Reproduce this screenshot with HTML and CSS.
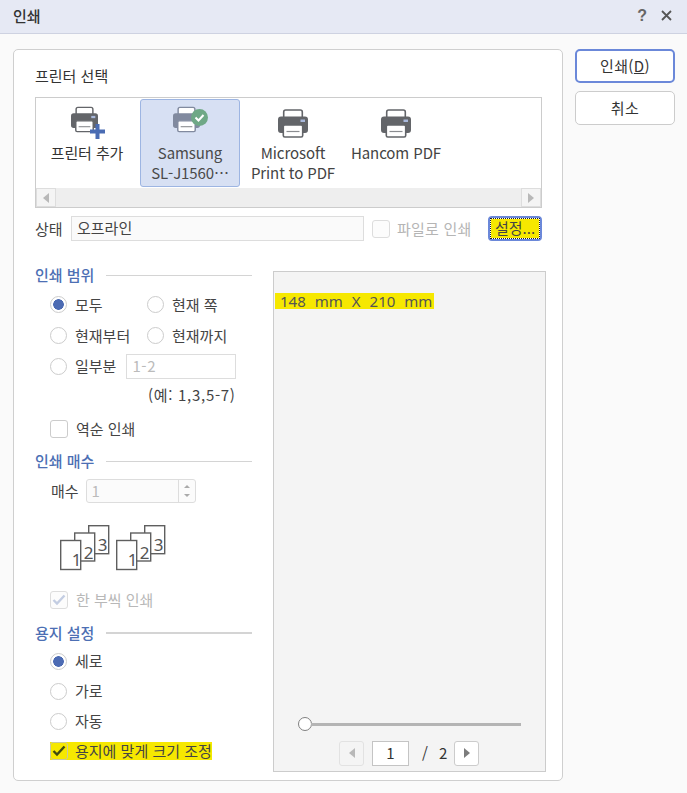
FILE: index.html
```html
<!DOCTYPE html>
<html lang="ko">
<head>
<meta charset="utf-8">
<title>인쇄</title>
<link rel="stylesheet" href="styles.css">
</head>
<body>
<svg class="defs" width="0" height="0">
  <symbol id="printer" viewBox="0 0 30 29">
    <rect x="5.7" y="1" width="18.6" height="12" rx="2" fill="#fff" stroke="currentColor" stroke-width="1.6"/>
    <path d="M3 7.5h24a3 3 0 0 1 3 3V21a3 3 0 0 1-3 3H3a3 3 0 0 1-3-3V10.500a3 3 0 0 1 3-3z" fill="currentColor"/>
    <rect x="22.500" y="10.500" width="4.500" height="2.500" fill="#a9b9dc"/>
    <rect x="5.300" y="16" width="19.400" height="12" rx="1.500" fill="#fff" stroke="currentColor" stroke-width="1.600"/>
    <path d="M8.500 22.500h13" stroke="#8a8c90" stroke-width="1.200"/>
  </symbol>
  <symbol id="pages" viewBox="0 0 50 46">
    <g fill="#fff" stroke="#5f5f5f" stroke-width="1.400">
      <rect x="28.700" y="0.700" width="20" height="28"/>
      <rect x="14.700" y="8" width="20" height="28"/>
      <rect x="0.700" y="15.500" width="20" height="29"/>
    </g>
  </symbol>
</svg>

<div class="titlebar">
  <span class="title">인쇄</span>
  <div class="title-tools">
    <span class="help">?</span>
    <svg class="close" width="11" height="11" viewBox="0 0 11 11"><path d="M1 1l9 9M10 1l-9 9" stroke="#555" stroke-width="1.800"/></svg>
  </div>
</div>

<div class="dialog">
  <main class="panel">
    <div class="top">
      <div class="heading">프린터 선택</div>
      <div class="printers">
        <div class="printer-row">
          <div class="printer printer-add">
            <span class="icon-wrap">
              <svg class="pr-icon" width="27" height="27"><use href="#printer"/></svg>
              <svg class="badge" width="17" height="17" viewBox="0 0 17 17"><path d="M8.500 1v15M1 8.500h15" stroke="#4a6cb3" stroke-width="4"/></svg>
            </span>
            <span class="pr-label">프린터 추가</span>
          </div>
          <div class="printer selected">
            <span class="icon-wrap">
              <svg class="pr-icon" width="27" height="27"><use href="#printer"/></svg>
              <svg class="badge badge-check" width="17" height="17" viewBox="0 0 17 17"><circle cx="8.500" cy="8.500" r="8.500" fill="#6fa886"/><path d="M4.500 8.500l3 3 5-5.500" fill="none" stroke="#fff" stroke-width="2"/></svg>
            </span>
            <span class="pr-label">Samsung<br>SL-J1560⋯</span>
          </div>
          <div class="printer">
            <span class="icon-wrap">
              <svg class="pr-icon" width="30" height="29"><use href="#printer"/></svg>
            </span>
            <span class="pr-label">Microsoft<br>Print to PDF</span>
          </div>
          <div class="printer">
            <span class="icon-wrap">
              <svg class="pr-icon" width="30" height="29"><use href="#printer"/></svg>
            </span>
            <span class="pr-label">Hancom PDF</span>
          </div>
        </div>
        <div class="hscroll">
          <span class="scroll-btn"><i class="tri tri-left"></i></span>
          <span class="scroll-btn"><i class="tri tri-right"></i></span>
        </div>
      </div>
      <div class="status-row">
        <span class="status-label">상태</span>
        <div class="status-field">오프라인</div>
        <span class="check disabled"></span>
        <span class="file-label">파일로 인쇄</span>
        <button class="setup"><span>설정...</span></button>
      </div>
    </div>

    <div class="lower">
      <div class="options">
        <div class="section first">인쇄 범위</div>
        <div class="grid-radios">
          <label class="row"><span class="radio on"></span>모두</label>
          <label class="row"><span class="radio"></span>현재 쪽</label>
          <label class="row"><span class="radio"></span>현재부터</label>
          <label class="row"><span class="radio"></span>현재까지</label>
        </div>
        <label class="row">
          <span class="radio"></span>일부분
          <span class="range-input">1-2</span>
        </label>
        <div class="hint">(예: 1,3,5-7)</div>
        <label class="row row-reverse"><span class="check"></span>역순 인쇄</label>

        <div class="section second">인쇄 매수</div>
        <div class="copies-row">
          <span>매수</span>
          <div class="spin">
            <span class="spin-value">1</span>
            <span class="spin-btns"><i class="tri tri-up"></i><i class="tri tri-down"></i></span>
          </div>
        </div>
        <div class="copies-art">
          <div class="copies-set">
            <svg class="pages-svg" width="50" height="46"><use href="#pages"/></svg>
            <span class="digit d3">3</span><span class="digit d2">2</span><span class="digit d1">1</span>
          </div>
          <div class="copies-set">
            <svg class="pages-svg" width="50" height="46"><use href="#pages"/></svg>
            <span class="digit d3">3</span><span class="digit d2">2</span><span class="digit d1">1</span>
          </div>
        </div>
        <label class="row row-collate muted">
          <span class="check disabled">
            <svg width="14" height="12" viewBox="0 0 14 12"><path d="M1.500 6l3.500 3.500 7.500-8" fill="none" stroke="#c3cde2" stroke-width="2.400"/></svg>
          </span>한 부씩 인쇄
        </label>

        <div class="section third">용지 설정</div>
        <label class="row"><span class="radio on"></span>세로</label>
        <label class="row"><span class="radio"></span>가로</label>
        <label class="row"><span class="radio"></span>자동</label>
        <label class="row"><span class="fit"><span class="check checked">
          <svg width="14" height="12" viewBox="0 0 14 12"><path d="M1.500 6l3.500 3.500 7.500-8" fill="none" stroke="#3e4a10" stroke-width="2.400"/></svg>
        </span><span class="fit-text">용지에 맞게 크기 조정</span></span></label>
      </div>

      <section class="preview">
        <div class="paper-size"><mark>148  mm  X  210  mm</mark></div>
        <div class="slider">
          <span class="thumb"></span>
          <span class="track"></span>
        </div>
        <div class="pager">
          <span class="page-btn off"><i class="tri tri-left"></i></span>
          <span class="page-input">1</span>
          <span class="page-slash">/</span>
          <span class="page-total">2</span>
          <span class="page-btn"><i class="tri tri-right dark"></i></span>
        </div>
      </section>
    </div>
  </main>

  <aside class="actions">
    <button class="btn primary">인쇄(<u>D</u>)</button>
    <button class="btn">취소</button>
  </aside>
</div>
</body>
</html>
```

FILE: styles.css
```css
* { box-sizing: border-box; }
html, body { margin: 0; padding: 0; }
body {
  width: 687px;
  height: 793px;
  overflow: hidden;
  background: #fafafa;
  color: #333;
  font: 15px/20px "Noto Sans CJK KR", "Noto Sans", sans-serif;
}
.defs { display: block; height: 0; }

.titlebar {
  height: 34px;
  background: #e6e9f4;
  border-bottom: 1px solid #ced2e1;
  display: flex;
  align-items: center;
  justify-content: space-between;
  padding: 0 15px 2px 13px;
}
.title { font-weight: 500; color: #333; }
.title-tools { display: flex; align-items: center; gap: 14px; }
.help { font: bold 16px/20px "Liberation Sans", sans-serif; color: #666; }

.dialog {
  display: flex;
  align-items: flex-start;
  padding: 15px 12px 0 13px;
  gap: 12px;
}
.panel {
  width: 550px;
  height: 732px;
  background: #fff;
  border: 1px solid #cfcfcf;
  border-radius: 5px;
  padding: 16px 15px 0 21px;
}
.top { margin-right: 5px; }
.heading { height: 20px; margin-bottom: 11px; color: #333; }

.printers {
  height: 111px;
  border: 1px solid #ccc;
  display: flex;
  flex-direction: column;
  background: #fff;
}
.printer-row { flex: 1; display: flex; gap: 3px; padding: 1px 0 1px 1px; }
.printer {
  flex: none;
  width: 100px;
  height: 88px;
  display: flex;
  flex-direction: column;
  align-items: center;
  padding-top: 9px;
  border: 1px solid transparent;
  border-radius: 3px;
  color: #444;
  text-align: center;
}
.icon-wrap { position: relative; display: block; width: 30px; height: 29px; margin-bottom: 5px; color: #636569; }
.pr-icon { display: block; }
.pr-label { line-height: 20px; white-space: nowrap; font-size: 15px; letter-spacing: -0.1px; }
.printer-add .icon-wrap { top: -3px; margin-left: -2px; }
.printer-add .pr-label { color: #333; }
.selected { background: #d7e0f3; border-color: #9db5e2; }
.selected .icon-wrap { color: #818a9f; top: -3px; margin-left: -4px; }
.selected .pr-label { color: #4a4a4a; }
.badge { position: absolute; left: 18px; top: 17px; }
.badge-check { left: 18px; top: 3px; }

.hscroll {
  height: 19px;
  background: #eee;
  display: flex;
  justify-content: space-between;
}
.scroll-btn {
  width: 20px;
  height: 19px;
  background: #f4f4f4;
  border: 1px solid #ddd;
  display: flex;
  align-items: center;
  justify-content: center;
}
.tri { display: block; width: 0; height: 0; border-style: solid; border-color: transparent; }
.tri-left { border-width: 5px 6px 5px 0; border-right-color: #b8b8b8; }
.tri-right { border-width: 5px 0 5px 6px; border-left-color: #b8b8b8; }
.tri-right.dark { border-left-color: #7c7c7c; }
.tri-up { border-width: 0 3px 3px; border-bottom-color: #aaa; }
.tri-down { border-width: 3px 3px 0; border-top-color: #aaa; }

.status-row {
  display: flex;
  align-items: center;
  height: 25px;
  margin-top: 8px;
}
.status-label { width: 36px; color: #444; }
.status-field {
  width: 293px;
  height: 25px;
  background: #fafafa;
  border: 1px solid #ddd;
  padding-left: 5px;
  line-height: 21px;
  color: #444;
}
.file-label { margin-left: 7px; color: #b5b5b5; letter-spacing: 0.2px; }
.setup {
  margin-left: auto;
  width: 54px;
  height: 25px;
  padding: 1px;
  background: #fff;
  border: 2px solid #6b88d9;
  border-radius: 4px;
  font: inherit;
  color: #444;
}
.setup span {
  display: block;
  height: 19px;
  line-height: 17px;
  background: #f6e800;
  outline: 1px dotted #222;
  white-space: nowrap;
}

.lower { display: flex; gap: 21px; margin-top: 24px; }
.options { width: 217px; flex: none; }
.section {
  display: flex;
  align-items: center;
  gap: 12px;
  height: 20px;
  color: #4d6fb4;
  font-weight: 500;
}
.section::after { content: ""; flex: 1; height: 1px; background: #d4d4d4; }
.section.first { margin-bottom: 4px; }
.section.second { margin-top: 7px; margin-bottom: 8px; }
.section.third { margin-top: 8px; margin-bottom: 3px; }
.section.third::after { height: 2px; }

.row {
  display: flex;
  align-items: center;
  height: 30px;
  padding-left: 15px;
  gap: 8px;
  color: #444;
  white-space: nowrap;
}
.grid-radios { display: grid; grid-template-columns: 112px 1fr; }
.grid-radios .row { height: 31px; }
.grid-radios .row:nth-child(even) { padding-left: 0; }
.radio {
  flex: none;
  width: 17px;
  height: 17px;
  border: 1.500px solid #ccc;
  border-radius: 50%;
  background: #fff;
}
.radio.on { background: radial-gradient(circle, #4c6bb3 0 5px, #fff 5.600px); }
.check {
  flex: none;
  display: flex;
  align-items: center;
  justify-content: center;
  width: 18px;
  height: 18px;
  border: 1px solid #ccc;
  border-radius: 3px;
  background: #fff;
}
.check.disabled { border-color: #ddd; margin-left: 8px; background: #fcfcfc; }
.options .check.disabled { margin-left: 0; }
.range-input {
  width: 110px;
  height: 25px;
  margin-left: 2px;
  border: 1px solid #ddd;
  padding-left: 5px;
  line-height: 22px;
  color: #bbb;
  letter-spacing: 0.6px;
}
.hint { height: 28px; padding-left: 113px; line-height: 28px; color: #444; letter-spacing: 0.7px; }
.row-reverse { margin-top: 5px; }
.copies-row { display: flex; align-items: center; gap: 7px; height: 24px; padding-left: 16px; color: #444; }
.spin {
  display: flex;
  width: 110px;
  height: 24px;
  border: 1px solid #ddd;
  border-radius: 3px;
  background: #fbfbfb;
}
.spin-value { flex: 1; padding-left: 5px; line-height: 22px; color: #bbb; }
.spin-btns {
  width: 17px;
  border-left: 1px solid #ddd;
  display: flex;
  flex-direction: column;
  align-items: center;
  justify-content: center;
  gap: 6px;
}
.copies-art { display: flex; gap: 6px; height: 46px; margin-top: 22px; padding-left: 25px; }
.copies-set { position: relative; width: 50px; height: 46px; }
.pages-svg { display: block; }
.digit { position: absolute; width: 11px; text-align: center; font: 17px/18px "Noto Sans", sans-serif; color: #555; }
.d3 { left: 37px; top: 11px; }
.d2 { left: 23px; top: 19px; }
.d1 { left: 11px; top: 26px; }
.row-collate { margin-top: 14px; }
.muted { color: #b8b8b8; }

.fit { display: flex; align-items: center; gap: 7px; height: 18px; background: #f6e800; }
.check.checked { background: #f6e800; border-color: #c9c9a0; }
.fit-text { color: #444; }

.preview {
  width: 273px;
  height: 501px;
  margin-top: 6px;
  background: #f4f4f4;
  border: 1px solid #ccc;
  display: flex;
  flex-direction: column;
}
.paper-size { padding: 21px 0 0 1px; height: 437px; }
mark {
  display: block;
  width: 159px;
  height: 16px;
  line-height: 16px;
  padding: 0 1px 0 5px;
  background: #f6e800;
  color: #555;
  white-space: pre;
  font-family: "Noto Sans", sans-serif;
  font-size: 15px;
  word-spacing: 0.6px;
}
.slider { display: flex; align-items: center; height: 14px; padding: 0 24px; margin-top: 8px; }
.thumb {
  flex: none;
  width: 14px;
  height: 14px;
  border: 1.500px solid #808080;
  border-radius: 50%;
  background: #fff;
  margin-right: -1px;
}
.track { flex: 1; height: 3px; background: #b4b4b4; }
.pager {
  display: flex;
  align-items: center;
  height: 26px;
  margin-top: 9px;
  padding-left: 65px;
  color: #333;
}
.page-btn {
  flex: none;
  display: flex;
  align-items: center;
  justify-content: center;
  width: 25px;
  height: 25px;
  background: #fff;
  border: 1px solid #ccc;
  border-radius: 3px;
}
.page-btn.off { background: #f4f4f4; border-color: #e2e2e2; }
.page-input {
  width: 37px;
  height: 25px;
  margin-left: 8px;
  background: #fff;
  border: 1px solid #c4c4c4;
  text-align: center;
  line-height: 22px;
}
.page-slash { margin-left: 13px; width: 8px; }
.page-total { margin-left: 9px; margin-right: 7px; }

.actions { display: flex; flex-direction: column; gap: 8px; }
.btn {
  width: 100px;
  height: 34px;
  padding: 0;
  background: #fff;
  border: 1px solid #ccc;
  border-radius: 5px;
  font: inherit;
  color: #333;
  letter-spacing: 0.4px;
}
.primary { border: 2px solid #6b88d9; }
```
